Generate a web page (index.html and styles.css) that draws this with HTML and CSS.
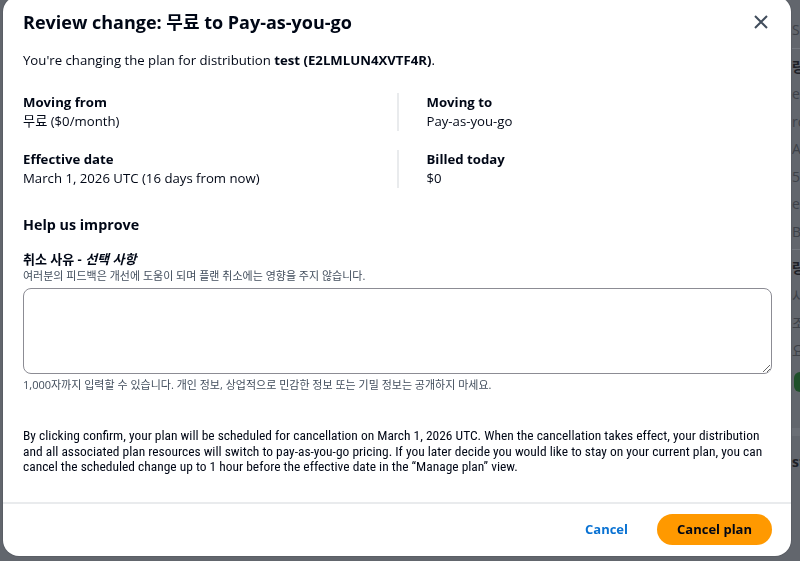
FILE: index.html
```html
<!DOCTYPE html>
<html lang="ko">
<head>
    <meta charset="UTF-8">
    <meta name="viewport" content="width=device-width, initial-scale=1.0">
    <title>Review change</title>
    <link rel="stylesheet" href="styles.css">
</head>
<body>
    <!-- dimmed page behind the dialog -->
    <div class="page">
        <div class="side">
            <p class="side-line">SC</p>
            <hr>
            <p class="side-line strong">랑</p>
            <p class="side-line">e I</p>
            <p class="side-line">rc</p>
            <p class="side-line">A</p>
            <p class="side-line">53</p>
            <p class="side-line">e</p>
            <p class="side-line">B</p>
            <hr>
            <p class="side-line strong">랑</p>
            <p class="side-line">사</p>
            <p class="side-line">조</p>
            <p class="side-line">요</p>
            <span class="side-btn"></span>
            <hr class="thick">
            <p class="side-line strong">st</p>
        </div>
    </div>

    <div class="modal" role="dialog">
        <header class="modal-header">
            <h1>Review change: 무료 to Pay-as-you-go</h1>
            <button class="close" aria-label="Close">
                <svg width="16" height="16" viewBox="0 0 16 16"><path d="M2 2l12 12M14 2L2 14" stroke="#414d5c" stroke-width="2" fill="none"/></svg>
            </button>
        </header>

        <div class="modal-body">
            <p class="intro">You're changing the plan for distribution <strong>test (E2LMLUN4XVTF4R)</strong>.</p>

            <div class="summary">
                <div class="item">
                    <div class="label">Moving from</div>
                    <div class="value">무료 ($0/month)</div>
                </div>
                <div class="item divided">
                    <div class="label">Moving to</div>
                    <div class="value">Pay-as-you-go</div>
                </div>
                <div class="item">
                    <div class="label">Effective date</div>
                    <div class="value">March 1, 2026 UTC (16 days from now)</div>
                </div>
                <div class="item divided">
                    <div class="label">Billed today</div>
                    <div class="value">$0</div>
                </div>
            </div>

            <h2>Help us improve</h2>
            <div class="field">
                <label for="reason">취소 사유 - <i>선택 사항</i></label>
                <div class="hint">여러분의 피드백은 개선에 도움이 되며 플랜 취소에는 영향을 주지 않습니다.</div>
                <textarea id="reason"></textarea>
                <div class="constraint">1,000자까지 입력할 수 있습니다. 개인 정보, 상업적으로 민감한 정보 또는 기밀 정보는 공개하지 마세요.</div>
            </div>

            <p class="notice">By clicking confirm, your plan will be scheduled for cancellation on March 1, 2026 UTC. When the cancellation takes effect, your distribution and all associated plan resources will switch to pay-as-you-go pricing. If you later decide you would like to stay on your current plan, you can cancel the scheduled change up to 1 hour before the effective date in the “Manage plan” view.</p>
        </div>

        <footer class="modal-footer">
            <button class="link-btn">Cancel</button>
            <button class="primary-btn">Cancel plan</button>
        </footer>
    </div>
</body>
</html>
```

FILE: styles.css
```css
/* General */
html {
    background: #62666d;
}

body {
    margin: 0;
    font-family: "Open Sans", "Noto Sans CJK KR", sans-serif;
    color: #000716;
    background: #62666d;
    overflow: hidden;
}

p {
    margin: 0;
}

/* Dimmed page behind */
.page {
    height: 561px;
    padding-left: 788px;
    background-color: #62666d;
}

.side {
    padding-top: 20px;
    font-size: 14px;
    color: #3d4148;
}

.side-line {
    height: 27.5px;
    line-height: 20px;
    padding-left: 4px;
    white-space: nowrap;
}

.side-line.strong {
    font-weight: 700;
    color: #1d2026;
}

.side hr {
    border: none;
    border-top: 1px solid #73777e;
    margin: 0 0 8px;
}

.side hr.thick {
    border-top: 8px solid #6a6e75;
    margin: 36px 0 16px;
}

.side-btn {
    display: block;
    width: 30px;
    height: 20px;
    margin: 4px 0 0 6px;
    border-radius: 6px;
    background: #1e4f2a;
}

/* Dialog */
.modal {
    position: fixed;
    left: 3px;
    top: -4px;
    width: 788px;
    height: 560px;
    box-sizing: border-box;
    background: #fff;
    border-radius: 16px;
    box-shadow: 0 0 0 1px #5a5e65;
    display: flex;
    flex-direction: column;
}

.modal-header {
    display: flex;
    justify-content: space-between;
    align-items: center;
    padding: 13px 19px 0 20px;
}

.modal-header h1 {
    margin: 0;
    font-size: 18px;
    line-height: 26px;
    font-weight: 700;
}

.close {
    border: none;
    background: none;
    padding: 0;
    margin-right: 3px;
    width: 16px;
    height: 16px;
    cursor: pointer;
}

.close svg {
    display: block;
}

.modal-body {
    flex: 1;
    padding: 0 19px 0 20px;
}

.intro {
    margin-top: 15px;
    font-size: 13.2px;
    line-height: 20px;
}

.intro strong {
    font-weight: 700;
}

.summary {
    display: grid;
    grid-template-columns: 1fr 1fr;
    row-gap: 19px;
    margin-top: 23px;
}

.item {
    font-size: 13.2px;
    line-height: 19px;
}

.item .label {
    font-weight: 700;
}

.item.divided {
    border-left: 2px solid #e9ebed;
    padding-left: 28px;
    margin-left: -1px;
}

.modal-body h2 {
    margin: 26px 0 0;
    font-size: 14.3px;
    line-height: 22px;
    font-weight: 700;
}

.field {
    margin-top: 14px;
}

.field label {
    display: block;
    font-size: 13px;
    line-height: 18px;
    font-weight: 700;
}

.hint,
.constraint {
    font-size: 11px;
    line-height: 16px;
    color: #414d5c;
}

.field textarea {
    display: block;
    width: 100%;
    height: 86px;
    box-sizing: border-box;
    margin-top: 4px;
    border: 1px solid #8c8c94;
    border-radius: 8px;
    resize: vertical;
    font-family: inherit;
}

.constraint {
    margin-top: 3px;
}

.notice {
    margin-top: 35px;
    font-family: "Liberation Sans Narrow", "Roboto Condensed", "Liberation Sans", sans-serif;
    font-size: 13.45px;
    line-height: 15.5px;
    color: #000716;
}

/* Footer */
.modal-footer {
    display: flex;
    justify-content: flex-end;
    align-items: center;
    gap: 29px;
    height: 54px;
    box-sizing: border-box;
    padding: 0 19px 2px 20px;
    border-top: 2px solid #e9ebed;
}

.link-btn {
    border: none;
    background: none;
    padding: 0;
    font-family: inherit;
    font-size: 13px;
    font-weight: 700;
    color: #0972d3;
    cursor: pointer;
}

.primary-btn {
    border: none;
    border-radius: 16px;
    background: #ff9900;
    color: #000716;
    font-family: inherit;
    font-size: 13px;
    font-weight: 700;
    height: 31px;
    padding: 0 20px;
    cursor: pointer;
}
```
